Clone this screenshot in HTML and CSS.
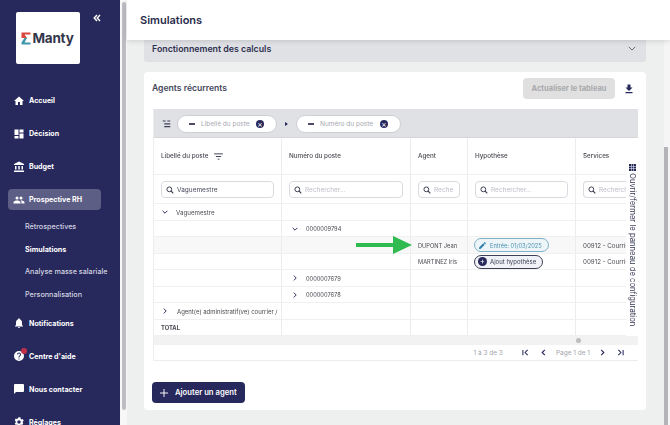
FILE: index.html
```html
<!DOCTYPE html>
<html lang="fr">
<head>
<meta charset="utf-8">
<title>Simulations</title>
<link rel="stylesheet" href="styles.css">
</head>
<body>
<aside class="sidebar">
  <div class="brand">
    <div class="logo">
      <svg class="sigma" viewBox="0 0 10 13" width="10" height="13"><path d="M0.5 0.5H9.5V2.6H3.6L6 6H0.5Z" fill="#d9473f"/><path d="M6 6L3.6 10.4H9.5V12.5H0.5V10.6L3.4 6Z" fill="#3f98ad"/></svg>
      <span class="logo-text">Manty</span>
    </div>
    <svg class="collapse" viewBox="0 0 8 8" width="8" height="8"><path d="M4 1L1.2 4L4 7M7 1L4.2 4L7 7" fill="none" stroke="#fff" stroke-width="1.4"/></svg>
  </div>
  <nav class="nav">
    <a class="nav-item"><svg class="nav-icon" viewBox="0 0 24 24"><path d="M10 20v-6h4v6h5v-8h3L12 3 2 12h3v8z"/></svg>Accueil</a>
    <a class="nav-item"><svg class="nav-icon" viewBox="0 0 24 24"><path d="M3 3h8v11H3zM13 3h8v6h-8zM13 11h8v10h-8zM3 16h8v5H3z"/></svg>Décision</a>
    <a class="nav-item"><svg class="nav-icon" viewBox="0 0 24 24"><path d="M4 10v7h3v-7zM10.500 10v7h3v-7zM2 22h20v-3H2zM17 10v7h3v-7zM12 1L2 6v2h20V6z"/></svg>Budget</a>
    <a class="nav-item active"><svg class="nav-icon" viewBox="0 0 24 24"><path d="M16 11a3 3 0 1 0 0-6 3 3 0 0 0 0 6zM8 11a3 3 0 1 0 0-6 3 3 0 0 0 0 6zM8 13c-2.300 0-7 1.200-7 3.500V19h14v-2.500C15 14.200 10.300 13 8 13zM16 13h-1c1.200.8 2 2 2 3.500V19h6v-2.500c0-2.300-4.700-3.500-7-3.500z"/></svg>Prospective RH</a>
    <div class="subnav">
      <a class="sub-item">Rétrospectives</a>
      <a class="sub-item current">Simulations</a>
      <a class="sub-item">Analyse masse salariale</a>
      <a class="sub-item">Personnalisation</a>
    </div>
    <a class="nav-item"><svg class="nav-icon" viewBox="0 0 24 24"><path d="M12 22a2 2 0 0 0 2-2h-4a2 2 0 0 0 2 2zM18 16v-5c0-3.100-1.600-5.600-4.500-6.300V4a1.500 1.500 0 0 0-3 0v.7C7.600 5.400 6 7.900 6 11v5l-2 2v1h16v-1z"/></svg>Notifications</a>
    <a class="nav-item"><span class="help-wrap"><svg class="nav-icon" viewBox="0 0 24 24"><path fill-rule="evenodd" d="M12 2a10 10 0 1 0 0 20 10 10 0 0 0 0-20zM11 19v-2h2v2zM15.100 11.300l-.9.9c-.7.7-1.200 1.300-1.200 2.800h-2v-.5c0-1.100.5-2.100 1.200-2.800l1.200-1.300c.4-.3.600-.8.600-1.400a2 2 0 0 0-4 0H8a4 4 0 0 1 8 0c0 .9-.4 1.700-.9 2.300z"/></svg><span class="dot"></span></span>Centre d'aide</a>
    <a class="nav-item"><svg class="nav-icon" viewBox="0 0 24 24"><path d="M20 2H4a2 2 0 0 0-2 2v18l4-4h14a2 2 0 0 0 2-2V4a2 2 0 0 0-2-2z"/></svg>Nous contacter</a>
    <a class="nav-item"><svg class="nav-icon" viewBox="0 0 24 24"><path fill-rule="evenodd" d="M19.400 13a7.500 7.500 0 0 0 0-2l2.100-1.600-2-3.500-2.500 1a7.500 7.500 0 0 0-1.700-1L15 2.300h-4L9.700 5a7.500 7.500 0 0 0-1.700 1l-2.500-1-2 3.500L5.600 11a7.500 7.500 0 0 0 0 2l-2.100 1.600 2 3.500 2.500-1a7.500 7.500 0 0 0 1.700 1l.3 2.600h4l.3-2.600a7.500 7.500 0 0 0 1.700-1l2.500 1 2-3.500zM12 15.500a3.500 3.500 0 1 1 0-7 3.500 3.500 0 0 1 0 7z"/></svg>Réglages</a>
  </nav>
</aside>
<div class="page-scroll"><div class="page-thumb"></div></div>
<div class="main">
  <header class="topbar"><h1>Simulations</h1></header>
  <div class="content-row">
    <main class="content">
      <section class="accordion">
        <h2>Fonctionnement des calculs</h2>
        <svg viewBox="0 0 10 6" width="8" height="5"><path d="M1 1l4 4 4-4" fill="none" stroke="#62646f" stroke-width="1.200"/></svg>
      </section>
      <section class="card">
        <div class="card-head">
          <h2>Agents récurrents</h2>
          <div class="card-actions">
            <button class="refresh">Actualiser le tableau</button>
            <svg viewBox="0 0 24 24" width="12" height="12"><path d="M19 9h-4V3H9v6H5l7 7zM5 18v2.500h14V18z" fill="#27285c"/></svg>
          </div>
        </div>
        <div class="grid-wrap">
          <div class="group-bar">
            <svg class="group-icon" viewBox="0 0 12 10" width="9" height="8"><path d="M1 1h4M3 4.800h8M3 8.500h8M7 1h4" stroke="#3d4055" stroke-width="1.500"/></svg>
            <span class="pill"><i class="dash"></i><span class="pill-label">Libellé du poste</span><i class="close">×</i></span>
            <span class="caret"></span>
            <span class="pill wide"><i class="dash"></i><span class="pill-label">Numéro du poste</span><i class="close">×</i></span>
          </div>
          <div class="table">
            <div class="row head">
              <div class="cell">Libellé du poste<svg class="filter" viewBox="0 0 10 8" width="9" height="7"><path d="M0 1h10M2 4h6M4 7h2" stroke="#3d4055" stroke-width="1.100"/></svg></div>
              <div class="cell">Numéro du poste</div>
              <div class="cell">Agent</div>
              <div class="cell">Hypothèse</div>
              <div class="cell">Services</div>
            </div>
            <div class="row filters">
              <div class="cell"><span class="search"><svg class="lens" viewBox="0 0 12 12" width="8" height="8"><circle cx="5" cy="5" r="3.600" fill="none" stroke="#3d4055" stroke-width="1.500"/><path d="M7.500 7.500L11 11" stroke="#3d4055" stroke-width="1.600"/></svg><span class="value">Vaguemestre</span></span></div>
              <div class="cell"><span class="search"><svg class="lens" viewBox="0 0 12 12" width="8" height="8"><circle cx="5" cy="5" r="3.600" fill="none" stroke="#3d4055" stroke-width="1.500"/><path d="M7.500 7.500L11 11" stroke="#3d4055" stroke-width="1.600"/></svg>Rechercher...</span></div>
              <div class="cell"><span class="search"><svg class="lens" viewBox="0 0 12 12" width="8" height="8"><circle cx="5" cy="5" r="3.600" fill="none" stroke="#3d4055" stroke-width="1.500"/><path d="M7.500 7.500L11 11" stroke="#3d4055" stroke-width="1.600"/></svg>Reche</span></div>
              <div class="cell"><span class="search"><svg class="lens" viewBox="0 0 12 12" width="8" height="8"><circle cx="5" cy="5" r="3.600" fill="none" stroke="#3d4055" stroke-width="1.500"/><path d="M7.500 7.500L11 11" stroke="#3d4055" stroke-width="1.600"/></svg>Rechercher...</span></div>
              <div class="cell"><span class="search open"><svg class="lens" viewBox="0 0 12 12" width="8" height="8"><circle cx="5" cy="5" r="3.600" fill="none" stroke="#3d4055" stroke-width="1.500"/><path d="M7.500 7.500L11 11" stroke="#3d4055" stroke-width="1.600"/></svg>Recherch</span></div>
            </div>
            <div class="row data">
              <div class="cell"><svg class="chev" viewBox="0 0 10 6"><path d="M1 1l4 4 4-4" fill="none" stroke="#27285c" stroke-width="1.600"/></svg>Vaguemestre</div>
              <div class="cell"></div><div class="cell"></div><div class="cell"></div><div class="cell"></div>
            </div>
            <div class="row data">
              <div class="cell"></div>
              <div class="cell num"><svg class="chev" viewBox="0 0 10 6"><path d="M1 1l4 4 4-4" fill="none" stroke="#27285c" stroke-width="1.600"/></svg>0000009794</div>
              <div class="cell"></div><div class="cell"></div><div class="cell"></div>
            </div>
            <div class="row data shaded">
              <div class="cell"></div><div class="cell"></div>
              <div class="cell num">DUPONT Jean</div>
              <div class="cell"><span class="chip entry"><svg viewBox="0 0 24 24" width="9" height="9"><path d="M3 17.300V21h3.700L17.800 9.900l-3.700-3.700zM20.700 7a1 1 0 0 0 0-1.400l-2.300-2.300a1 1 0 0 0-1.400 0l-1.800 1.800 3.700 3.700z" fill="#2d80a8"/></svg>Entrée: 01/03/2025</span></div>
              <div class="cell">00912 - Courrie</div>
            </div>
            <div class="row data">
              <div class="cell"></div><div class="cell"></div>
              <div class="cell num">MARTINEZ Iris</div>
              <div class="cell"><span class="chip add"><i class="plus">+</i>Ajout hypothèse</span></div>
              <div class="cell">00912 - Courrie</div>
            </div>
            <div class="row data">
              <div class="cell"></div>
              <div class="cell num"><svg class="chev side" viewBox="0 0 6 10"><path d="M1 1l4 4-4 4" fill="none" stroke="#27285c" stroke-width="1.600"/></svg>0000007679</div>
              <div class="cell"></div><div class="cell"></div><div class="cell"></div>
            </div>
            <div class="row data">
              <div class="cell"></div>
              <div class="cell num"><svg class="chev side" viewBox="0 0 6 10"><path d="M1 1l4 4-4 4" fill="none" stroke="#27285c" stroke-width="1.600"/></svg>0000007678</div>
              <div class="cell"></div><div class="cell"></div><div class="cell"></div>
            </div>
            <div class="row data">
              <div class="cell long"><svg class="chev side" viewBox="0 0 6 10"><path d="M1 1l4 4-4 4" fill="none" stroke="#27285c" stroke-width="1.600"/></svg>Agent(e) administratif(ve) courrier /</div>
              <div class="cell"></div><div class="cell"></div><div class="cell"></div><div class="cell"></div>
            </div>
            <div class="row data total">
              <div class="cell">TOTAL</div>
              <div class="cell"></div><div class="cell"></div><div class="cell"></div><div class="cell"></div>
            </div>
            <div class="hscroll"><span class="hthumb"></span></div>
            <svg class="arrow" viewBox="0 0 56 18" width="56" height="18"><path d="M0 7H37V0L56 9L37 18V11H0Z" fill="#2fbb4f"/></svg>
            <div class="side-panel"><svg viewBox="0 0 7 7" width="7" height="7"><path d="M0 0h2v2H0zM2.500 0h2v2h-2zM5 0h2v2H5zM0 2.500h2v2H0zM2.500 2.500h2v2h-2zM5 2.500h2v2H5zM0 5h2v2H0zM2.500 5h2v2h-2zM5 5h2v2H5z" fill="#27285c"/></svg><span class="side-label">Ouvrir/fermer le panneau de configuration</span></div>
          </div>
          <div class="pager">
            <span class="count">1 à 3 de 3</span>
            <span class="pager-btns">
              <svg viewBox="0 0 8 8" width="7" height="7"><path d="M1 1v6M6.500 1L3.500 4l3 3" fill="none" stroke="#27285c" stroke-width="1.200"/></svg>
              <svg viewBox="0 0 8 8" width="7" height="7"><path d="M5.500 1L2.500 4l3 3" fill="none" stroke="#27285c" stroke-width="1.300"/></svg>
              <span class="page">Page 1 de 1</span>
              <svg viewBox="0 0 8 8" width="7" height="7"><path d="M2.500 1l3 3-3 3" fill="none" stroke="#27285c" stroke-width="1.300"/></svg>
              <svg viewBox="0 0 8 8" width="7" height="7"><path d="M7 1v6M1.500 1l3 3-3 3" fill="none" stroke="#27285c" stroke-width="1.200"/></svg>
            </span>
          </div>
        </div>
        <button class="add-agent"><svg viewBox="0 0 10 10" width="8" height="8"><path d="M5 0v10M0 5h10" stroke="#fff" stroke-width="1.200"/></svg>Ajouter un agent</button>
      </section>
    </main>
    <div class="main-scroll"><div class="main-thumb"></div></div>
  </div>
</div>
</body>
</html>
```

FILE: styles.css
```css
* { box-sizing: border-box; }
html, body { margin: 0; height: 425px; overflow: hidden; }
body { display: flex; font-family: "Inter", "Liberation Sans", sans-serif; color: #3d4055; background: #eef0ef; }
h1, h2 { margin: 0; }
i { font-style: normal; }
button { font-family: inherit; border: 0; }

.sidebar { width: 120px; flex: none; height: 425px; overflow: hidden; background: #27285c; color: #fff; padding: 12px 0 0 0; }
.brand { display: flex; align-items: flex-start; height: 52px; padding-left: 16px; }
.logo { width: 64px; height: 52px; background: #fff; border-radius: 2px; display: flex; align-items: center; justify-content: center; padding-right: 1px; }
.sigma { margin-right: 1px; }
.logo-text { font-size: 13.500px; font-weight: 700; color: #33364a; letter-spacing: -0.2px; }
.collapse { margin: 2px 0 0 13px; }
.nav { display: flex; flex-direction: column; margin-top: 26px; }
.nav-item { display: flex; align-items: center; height: 21px; margin: 0 19px 12px 8px; padding-left: 5px; font-size: 7.100px; font-weight: 700; border-radius: 4px; white-space: nowrap; }
.nav-item.active { background: #5d5e85; margin-bottom: 5px; }
.nav-icon { width: 12px; height: 12px; fill: #fff; margin-right: 4px; flex: none; }
.help-wrap { position: relative; display: flex; }
.dot { position: absolute; top: -2px; left: 8px; width: 6px; height: 6px; border-radius: 50%; background: #c0304a; }
.subnav { display: flex; flex-direction: column; margin-bottom: 7px; }
.sub-item { height: 22.700px; display: flex; align-items: center; padding-left: 25px; font-size: 7.200px; font-weight: 500; color: #d4d5e1; white-space: nowrap; }
.sub-item.current { color: #fff; font-weight: 700; }

.page-scroll { width: 7px; flex: none; background: #f7f7f7; padding: 2px 2px 15px 2px; height: 425px; }
.page-thumb { width: 3.500px; height: 100%; background: #bcbcc2; border-radius: 2px; }

.main { flex: 1; min-width: 0; display: flex; flex-direction: column; height: 425px; }
.topbar { height: 40px; flex: none; background: #fff; display: flex; align-items: center; padding-left: 13px; box-shadow: 0 1px 5px rgba(0,0,0,.14); position: relative; z-index: 2; }
.topbar h1 { font-size: 11px; font-weight: 600; color: #2a2c4c; }
.content-row { flex: 1; display: flex; min-height: 0; }
.content { flex: 1; min-width: 0; padding: 0 18px 0 17px; display: flex; flex-direction: column; gap: 10px; }
.main-scroll { width: 6px; flex: none; background: #f5f5f5; padding: 107px 2px 0 0; }
.main-thumb { height: 100%; background: #b3b3b8; }

.accordion { height: 22px; background: #dfe1e5; border-radius: 0 0 3px 3px; display: flex; align-items: center; justify-content: space-between; padding: 0 10px 5px 8px; }
.accordion h2 { font-size: 8.800px; font-weight: 600; color: #2f3150; }

.card { background: #fff; border-radius: 4px; height: 338px; padding: 6px 9px 0 8px; display: flex; flex-direction: column; }
.card-head { height: 31px; flex: none; display: flex; align-items: flex-start; justify-content: space-between; }
.card-head h2 { font-size: 8.600px; line-height: 21px; font-weight: 600; color: #44465a; }
.card-actions { display: flex; align-items: center; gap: 8px; padding-right: 2px; }
.refresh { width: 92px; height: 21px; background: #e0e0e0; color: #a9a9ad; font-size: 7.500px; font-weight: 700; border-radius: 4px; padding: 0; }

.grid-wrap { margin-left: 1px; flex: none; border-bottom: 1px solid #ededed; border-left: 1px solid #ededed; width: 485px; }
.group-bar { height: 29px; background: #dfe1e5; display: flex; align-items: center; padding: 2px 0 0 8px; border-bottom: 1px solid #d5d6da; }
.group-icon { margin-right: 6px; }
.pill { width: 100px; height: 18px; background: #fff; border: 1px solid #cfd0d6; border-radius: 9px; display: flex; align-items: center; padding: 0 12px 0 11px; font-size: 6.500px; color: #a7a8b2; }
.pill.wide { width: 105px; }
.dash { width: 6px; height: 2px; background: #4b4c6a; margin-right: 6px; flex: none; }
.pill-label { flex: 1; white-space: nowrap; }
.close { width: 8px; height: 8px; border-radius: 50%; background: #27285c; color: #fff; font-size: 8px; line-height: 8px; text-align: center; flex: none; }
.caret { width: 0; height: 0; border-left: 3px solid #27285c; border-top: 2px solid transparent; border-bottom: 2px solid transparent; margin: 0 8px; }

.table { position: relative; overflow: hidden; will-change: transform; }
.row { display: grid; grid-template-columns: 128px 129px 57px 108px 62px; height: 16.500px; border-bottom: 1px solid #f0f0f0; font-size: 6.200px; color: #4a4a52; }
.cell { display: flex; align-items: center; padding-left: 7px; border-right: 1.500px solid #ececec; white-space: nowrap; overflow: hidden; min-width: 0; }
.cell:last-child { border-right: 0; overflow: visible; }
.row.head { height: 37px; font-weight: 500; font-size: 6.300px; }
.filter { margin-left: 5px; }
.row.filters { height: 29px; }
.row.data .cell { padding-top: 1px; }
.row.shaded { background: #f8f8f8; }
.row.total { font-weight: 700; font-size: 5.800px; }
.num { font-size: 5.700px; }
.long { font-size: 6px; }
.search { display: flex; align-items: center; gap: 3px; width: 100%; height: 17px; margin-top: 1px; border: 1px solid #d9dae0; border-radius: 4px; padding-left: 4px; margin-right: 7px; color: #bcbdc6; font-size: 6.500px; overflow: hidden; background: #fff; }
.search.open { width: 48px; margin-right: 0; border-right: 0; border-radius: 4px 0 0 4px; flex: none; }
.lens { flex: none; }
.value { color: #4a4c60; }
.chev { width: 6px; height: 4px; margin: 0 8px 0 3px; flex: none; }
.chev.side { width: 4px; height: 6px; margin: 0 9px 0 4px; }
.cell:first-child .chev { margin-left: 1px; }
.cell.long .chev.side { margin: 0 10px 0 2px; }
.chip { display: flex; align-items: center; height: 14px; margin-left: -1px; border-radius: 7px; border: 1px solid #7fb2c8; padding: 0 6px 0 3px; gap: 3px; font-size: 6px; white-space: nowrap; }
.chip.entry { background: #edf5f8; color: #4d93b2; font-size: 5.700px; }
.chip.add { background: #f1f2f7; border-color: #3d4055; color: #3d4055; }
.plus { width: 9px; height: 9px; border-radius: 50%; background: #27285c; color: #fff; font-size: 8px; line-height: 9px; text-align: center; }
.hscroll { height: 9px; background: #f2f2f2; position: relative; }
.hthumb { position: absolute; left: 422px; top: 2px; width: 5px; height: 5px; border-radius: 50%; background: #bdbdbd; }
.arrow { position: absolute; left: 202px; top: 98px; }
.side-panel { position: absolute; top: 0; right: 0; width: 12px; height: 198px; background: #fff; display: flex; flex-direction: column; align-items: center; padding-top: 26px; gap: 2px; color: #333550; font-size: 7.700px; }
.side-label { writing-mode: vertical-rl; white-space: nowrap; }
.pager { height: 15px; display: flex; align-items: center; justify-content: flex-end; padding-right: 14px; font-size: 6.500px; color: #a3a4ad; }
.count { margin-right: 19px; }
.pager-btns { display: flex; align-items: center; gap: 11px; }
.page { margin: 0 -2px; }

.add-agent { align-self: flex-start; margin-top: 21px; width: 93px; height: 21px; background: #27285c; color: #fff; font-size: 7.700px; font-weight: 600; border-radius: 4px; display: flex; align-items: center; gap: 7px; padding: 0 0 0 8px; }
```
